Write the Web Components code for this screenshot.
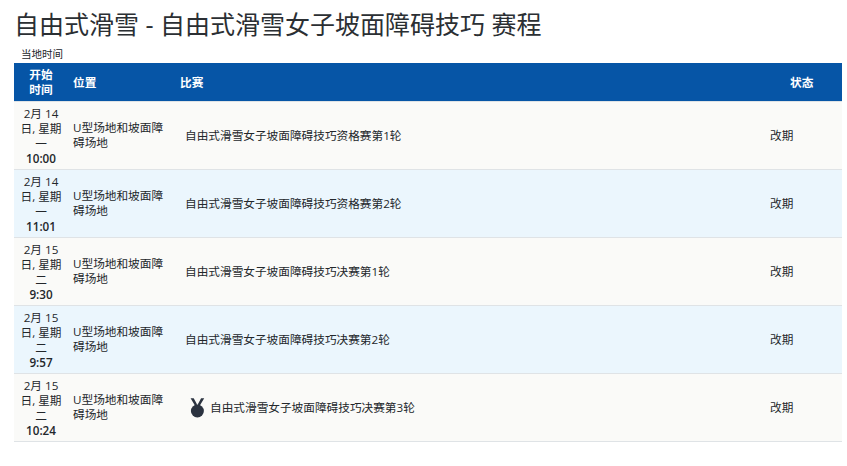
<!DOCTYPE html>
<html lang="zh">
<head>
<meta charset="utf-8">
<title>赛程</title>
<style>
  body {
    margin: 0;
    background: #fff;
    color: #23272b;
    font-family: "Open Sans", "Noto Sans CJK SC", sans-serif;
  }
</style>
</head>
<body>
<schedule-page heading="自由式滑雪 - 自由式滑雪女子坡面障碍技巧 赛程" note="当地时间">
  <schedule-row date="2月 14 日, 星期一" time="10:00" place="U型场地和坡面障碍场地" contest="自由式滑雪女子坡面障碍技巧资格赛第1轮" status="改期"></schedule-row>
  <schedule-row alt date="2月 14 日, 星期一" time="11:01" place="U型场地和坡面障碍场地" contest="自由式滑雪女子坡面障碍技巧资格赛第2轮" status="改期"></schedule-row>
  <schedule-row date="2月 15 日, 星期二" time="9:30" place="U型场地和坡面障碍场地" contest="自由式滑雪女子坡面障碍技巧决赛第1轮" status="改期"></schedule-row>
  <schedule-row alt date="2月 15 日, 星期二" time="9:57" place="U型场地和坡面障碍场地" contest="自由式滑雪女子坡面障碍技巧决赛第2轮" status="改期"></schedule-row>
  <schedule-row medal date="2月 15 日, 星期二" time="10:24" place="U型场地和坡面障碍场地" contest="自由式滑雪女子坡面障碍技巧决赛第3轮" status="改期"></schedule-row>
</schedule-page>

<script>
  class SchedulePage extends HTMLElement {
    constructor() {
      super();
      this.attachShadow({ mode: 'open' });
      this.render();
    }

    render() {
      this.shadowRoot.innerHTML = `
        <style>
          :host {
            display: block;
            padding: 10px 5px 0 14px;
          }

          h1 {
            margin: 0;
            font-size: 25px;
            line-height: 29px;
            font-weight: 400;
            color: #2b2f33;
          }

          .note {
            margin: 7px 0 0 7px;
            font-size: 10.5px;
            line-height: 17px;
            height: 17px;
          }
        </style>
        <h1>${this.getAttribute('heading')}</h1>
        <div class="note">${this.getAttribute('note')}</div>
        <schedule-head></schedule-head>
        <slot></slot>
      `;
    }
  }

  class ScheduleHead extends HTMLElement {
    constructor() {
      super();
      this.attachShadow({ mode: 'open' });
      this.shadowRoot.innerHTML = `
        <style>
          :host {
            display: grid;
            grid-template-columns: 54px 107px 590px 77px;
            height: 38px;
            align-items: center;
            background: #0655a6;
            color: #fff;
            font-size: 11.67px;
            font-weight: 700;
            line-height: 15px;
          }

          .start {
            text-align: center;
          }

          .place {
            padding-left: 5px;
          }

          .contest {
            padding-left: 5px;
          }

          .status {
            padding-left: 25px;
          }
        </style>
        <div class="start">开始<br>时间</div>
        <div class="place">位置</div>
        <div class="contest">比赛</div>
        <div class="status">状态</div>
      `;
    }
  }

  class ScheduleRow extends HTMLElement {
    constructor() {
      super();
      this.attachShadow({ mode: 'open' });
      this.render();
    }

    render() {
      const medal = this.hasAttribute('medal') ? `
        <svg viewBox="0 0 16 22" width="16" height="22" aria-hidden="true">
          <path d="M0.6 1.2h3.1l3.4 6.4-1.9 1.4zM14.2 1.2h-3.1L7.7 7.6l1.9 1.4z" fill="#2b3340"/>
          <circle cx="7.4" cy="14" r="6.5" fill="#2b3340"/>
        </svg>` : '';
      this.shadowRoot.innerHTML = `
        <style>
          :host {
            display: grid;
            grid-template-columns: 54px 107px 590px 77px;
            height: 67px;
            align-items: center;
            border-top: 1px solid #dfe3e6;
            background: #fafaf8;
            color: #23272b;
            font-size: 11.67px;
            line-height: 15px;
          }

          :host(:last-child) {
            border-bottom: 1px solid #dfe3e6;
          }

          :host([alt]) {
            background: #ebf6fd;
          }

          .date {
            text-align: center;
            padding: 0 5px;
          }

          .date b {
            display: block;
            font-weight: 600;
          }

          .place {
            padding: 0 8px 2px 5px;
          }

          .contest {
            display: flex;
            align-items: center;
            gap: 4px;
            padding-left: 10px;
          }

          .contest svg {
            margin-left: 5px;
          }

          .status {
            padding-left: 5px;
          }
        </style>
        <div class="date">${this.getAttribute('date')}<b>${this.getAttribute('time')}</b></div>
        <div class="place">${this.getAttribute('place')}</div>
        <div class="contest">${medal}<span>${this.getAttribute('contest')}</span></div>
        <div class="status">${this.getAttribute('status')}</div>
      `;
    }
  }

  customElements.define('schedule-head', ScheduleHead);
  customElements.define('schedule-row', ScheduleRow);
  customElements.define('schedule-page', SchedulePage);
</script>
</body>
</html>
